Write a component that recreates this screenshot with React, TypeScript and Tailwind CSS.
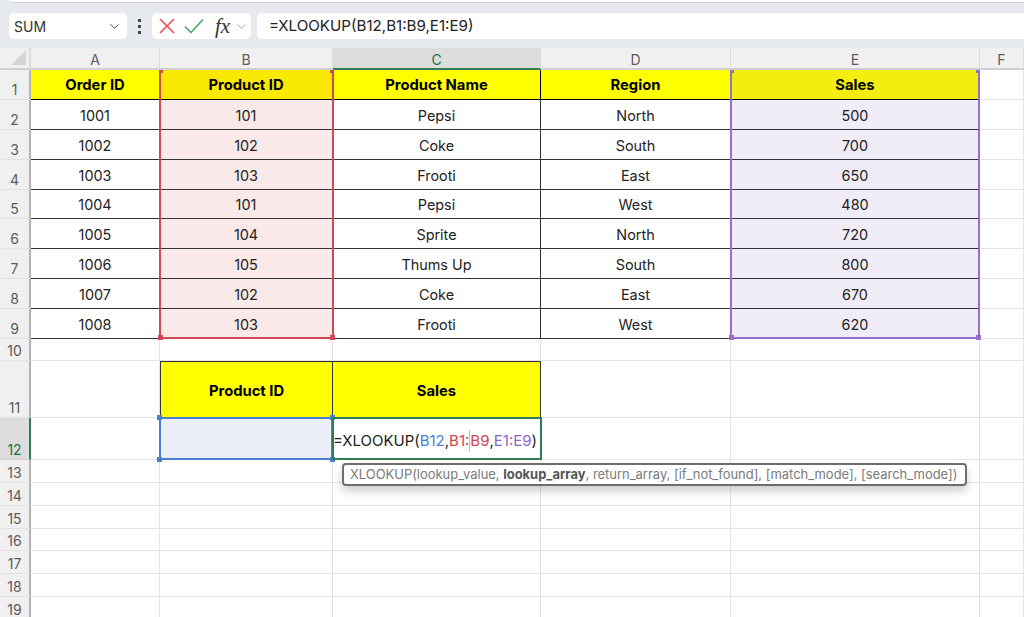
import { ChevronDown } from "lucide-react";

const font = "font-['Inter','Noto_Sans',sans-serif]";

const orders = [
  ["1001", "101", "Pepsi", "North", "500"],
  ["1002", "102", "Coke", "South", "700"],
  ["1003", "103", "Frooti", "East", "650"],
  ["1004", "101", "Pepsi", "West", "480"],
  ["1005", "104", "Sprite", "North", "720"],
  ["1006", "105", "Thums Up", "South", "800"],
  ["1007", "102", "Coke", "East", "670"],
  ["1008", "103", "Frooti", "West", "620"],
];

const headers = ["Order ID", "Product ID", "Product Name", "Region", "Sales"];
const headerFills = ["bg-[#ffff00]", "bg-[#f9e800]", "bg-[#ffff00]", "bg-[#ffff00]", "bg-[#f4ee10]"];
const bodyFills = ["bg-white", "bg-[#f9e9e9]", "bg-white", "bg-white", "bg-[#f0ecf8]"];
const columns = ["A", "B", "C", "D", "E", "F"];

const ColHeader = ({ label }: { label: string }) => (
  <div
    className={`flex items-center justify-center pt-[3px] border-r border-b border-r-[#dcdcdc] text-[14px] ${
      label === "C"
        ? "bg-[#dcdcdc] border-b-2 border-b-[#2f7d55] text-[#217346]"
        : "bg-[#f0f0f0] border-b-2 border-b-[#cfcfcf] text-[#5c5c5c]"
    }`}
  >
    {label}
  </div>
);

const RowHeader = ({ n }: { n: number }) => (
  <div
    className={`flex items-end justify-center border-r-2 border-b text-[14px] leading-[18px] ${
      n === 12
        ? "bg-[#dcdcdc] border-r-[#2f7d55] border-b-[#cfcfcf] text-[#217346]"
        : "bg-[#f0f0f0] border-r-[#b4b4b4] border-b-[#e2e2e2] text-[#5c5c5c]"
    }`}
  >
    {n}
  </div>
);

const Cell = ({ className = "", children }: { className?: string; children?: React.ReactNode }) => (
  <div className={`flex items-center justify-center border-r border-b border-[#e4e4e4] ${className}`}>{children}</div>
);

// coloured range with its handles; the top edge is only the two corner ticks
const OpenRange = ({ className, handle }: { className: string; handle: string }) => (
  <div className={`absolute border-x-2 border-b-2 ${className}`}>
    <span className={`absolute -left-[2px] top-0 w-[4px] h-[3px] ${handle}`} />
    <span className={`absolute -right-[2px] top-0 w-[4px] h-[3px] ${handle}`} />
    <span className={`absolute -left-[3px] -bottom-[3px] size-[5px] ${handle}`} />
    <span className={`absolute -right-[3px] -bottom-[3px] size-[5px] ${handle}`} />
  </div>
);

const emptyRows = [13, 14, 15, 16, 17, 18, 19];

export default function App() {
  return (
    <div className={`w-[1024px] h-[617px] overflow-hidden bg-[#e6e9ed] flex flex-col ${font}`}>
      {/* ribbon edge */}
      <div className="h-[3px] ml-[10px] bg-white rounded-bl-[6px] border-b border-[#cfd2d6] shrink-0" />

      {/* formula bar */}
      <div className="h-[26px] mt-[10px] mb-[9px] pl-[9px] flex items-stretch shrink-0">
        <div className="w-[118px] bg-white rounded-[5px] flex items-center justify-between pl-[5px] pr-[5px] text-[14px] text-[#333]">
          SUM
          <ChevronDown size={15} strokeWidth={1.6} className="text-[#444]" />
        </div>
        <div className="w-[25px] flex flex-col items-center justify-center gap-[3px]">
          <span className="size-[3px] bg-[#444]" />
          <span className="size-[3px] bg-[#444]" />
          <span className="size-[3px] bg-[#444]" />
        </div>
        <div className="w-[99px] bg-white rounded-[5px] flex items-center pl-[7px]">
          <svg width="16" height="16" viewBox="0 0 16 16" fill="none" className="stroke-[#ee4b4b]">
            <path d="M1 1 L15 15 M15 1 L1 15" strokeWidth="1.5" />
          </svg>
          <svg width="20" height="16" viewBox="0 0 20 16" fill="none" className="ml-[9px] stroke-[#3fa45f]">
            <path d="M1 8.5 L7 14.5 L19 1.5" strokeWidth="1.5" />
          </svg>
          <span className="w-[18px] ml-[11px] font-['Liberation_Serif',serif] italic font-medium text-[21px] leading-none text-[#333]">
            fx
          </span>
          <ChevronDown size={15} strokeWidth={1.4} className="ml-[1px] text-[#999]" />
        </div>
        <div className="flex-1 ml-[6px] bg-white rounded-l-[5px] flex items-center pl-[12px] text-[15.15px] text-[#222]">
          =XLOOKUP(B12,B1:B9,E1:E9)
        </div>
      </div>

      {/* sheet */}
      <div className="relative flex-1 bg-white">
        <div className="grid grid-cols-[31px_129px_173px_208px_190px_249px_1fr] grid-rows-[22px_30px_30px_30px_30px_29px_30px_30px_30px_30px_22px_57px_42px_23px_23px_23px_22px_23px_23px_23px] text-[14.4px] text-[#222]">
          <div className="relative bg-[#f0f0f0] border-r-2 border-b-2 border-r-[#dcdcdc] border-b-[#cfcfcf]">
            <span className="absolute right-[3px] bottom-[3px] border-l-[15px] border-b-[15px] border-l-transparent border-b-[#d5d5d5]" />
          </div>
          {columns.map((c) => (
            <ColHeader key={c} label={c} />
          ))}

          <RowHeader n={1} />
          {headers.map((h, i) => (
            <Cell key={h} className={`${headerFills[i]} !border-black font-bold text-[14.75px] text-black pt-[2px]`}>
              {h}
            </Cell>
          ))}
          <Cell />

          {orders.map((row, r) => (
            <div key={row[0]} className="contents">
              <RowHeader n={r + 2} />
              {row.map((value, i) => (
                <Cell key={i} className={`${bodyFills[i]} !border-[#333] pt-[2px]`}>
                  {value}
                </Cell>
              ))}
              <Cell />
            </div>
          ))}

          <RowHeader n={10} />
          {columns.map((c) => (
            <Cell key={c} />
          ))}

          <RowHeader n={11} />
          <Cell />
          <Cell className="bg-[#ffff00] !border-[#333] border-t border-l font-bold text-[14.75px] text-black pt-[4px]">Product ID</Cell>
          <Cell className="bg-[#ffff00] !border-[#333] border-t font-bold text-[14.75px] text-black pt-[4px]">Sales</Cell>
          <Cell />
          <Cell />
          <Cell />

          <RowHeader n={12} />
          <Cell />
          <Cell className="bg-[#eaeff8]" />
          <Cell className="!justify-start pt-[5px] text-[15px] text-[#222] whitespace-nowrap">
            =XLOOKUP(<span className="text-[#4a7fd4]">B12</span>,<span className="text-[#d0444f]">B1:</span>
            <span className="border-l border-[#bbb] text-[#d0444f]">B9</span>,<span className="text-[#8e64c8]">E1:E9</span>)
          </Cell>
          <Cell />
          <Cell />
          <Cell />

          {emptyRows.map((n) => (
            <div key={n} className="contents">
              <RowHeader n={n} />
              {columns.map((c) => (
                <Cell key={c} />
              ))}
            </div>
          ))}
        </div>

        {/* range highlights */}
        <OpenRange className="left-[159px] top-[22px] w-[175px] h-[269px] border-[#cf4a57]" handle="bg-[#cf4a57]" />
        <OpenRange className="left-[730px] top-[22px] w-[250px] h-[269px] border-[#9370c9]" handle="bg-[#9370c9]" />
        <div className="absolute left-[159px] top-[369px] w-[174px] h-[43px] border-2 border-[#4a7fd4]">
          <span className="absolute -left-[4px] -top-[4px] size-[5px] bg-[#4a7fd4]" />
          <span className="absolute -right-[4px] -top-[4px] size-[5px] bg-[#4a7fd4]" />
          <span className="absolute -left-[4px] -bottom-[4px] size-[5px] bg-[#4a7fd4]" />
          <span className="absolute -right-[4px] -bottom-[4px] size-[5px] bg-[#4a7fd4]" />
        </div>
        <div className="absolute left-[332px] top-[369px] w-[210px] h-[43px] border-2 border-[#2f7d55]" />

        {/* argument tooltip */}
        <div className="absolute left-[342px] top-[415px] w-[625px] h-[23px] bg-white border-2 border-[#6e6e6e] rounded-[4px] shadow-[0_5px_10px_rgba(0,0,0,0.2)] flex items-center pl-[6px] text-[12.95px] text-[#7a7a7a] whitespace-nowrap">
          XLOOKUP(lookup_value,&nbsp;<b className="text-[#555]">lookup_array</b>, return_array, [if_not_found], [match_mode], [search_mode])
        </div>

        {/* sheet tab scroller edge */}
        <div className="absolute left-0 bottom-0 w-[128px] h-[2px] bg-[#e6e9ed] rounded-tr-[3px]" />
        <div className="absolute left-[198px] right-0 bottom-0 h-[2px] bg-[#e6e9ed] rounded-tl-[3px]" />
      </div>
    </div>
  );
}
